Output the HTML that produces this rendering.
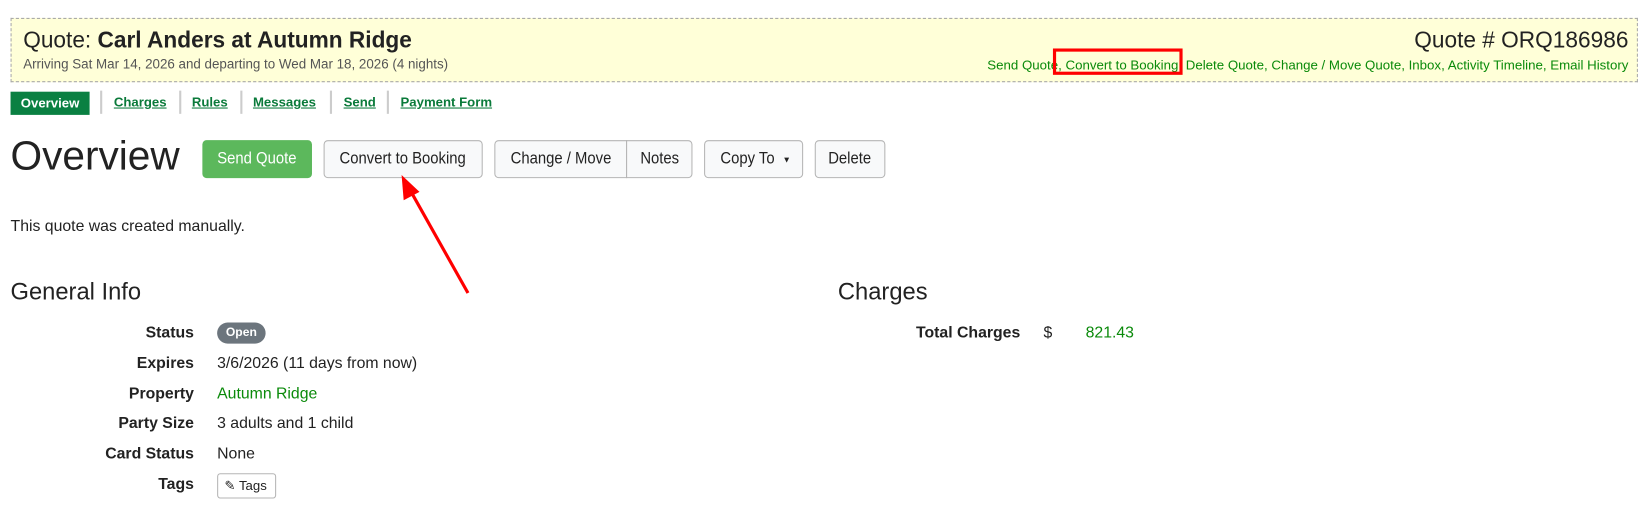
<!DOCTYPE html>
<html><head><meta charset="utf-8"><style>
*{box-sizing:border-box;margin:0;padding:0}
body{width:1651px;height:512px;background:#fff;font-family:"Liberation Sans",Arial,sans-serif;color:#222;position:relative;overflow:hidden}
#w{position:absolute;left:0;top:0;width:1567px;height:486px;transform:scale(1.054);transform-origin:0 0}
.a{position:absolute;white-space:nowrap}
.hdr{left:10px;top:17px;width:1544px;height:61px;background:#ffffd8;border:1px dashed #aaa}
.g{color:#0a8a0a}
.nar{display:inline-block;transform:scaleX(.88);transform-origin:center}
.tab{font-size:12.5px;font-weight:bold;color:#0a7a3a;text-decoration:underline;top:90px}
.sep{top:86px;width:2px;height:22px;background:#ccc}
.btn{top:133px;height:36px;border:1px solid #b5b5b5;border-radius:4px;background:#f8f9fa;font-size:16px;color:#222;display:flex;align-items:center;justify-content:center}
.lbl{font-size:15px;font-weight:bold;width:184px;text-align:right;left:0}
.val{font-size:15px;left:206px}
</style></head><body><div id="w">
<div class="a hdr"></div>
<div class="a" style="left:22px;top:26px;font-size:21.5px">Quote: <b>Carl Anders at Autumn Ridge</b></div>
<div class="a" style="left:22px;top:54px;font-size:12.7px;color:#555">Arriving Sat Mar 14, 2026 and departing to Wed Mar 18, 2026 (4 nights)</div>
<div class="a" style="right:22px;top:26px;font-size:21.5px">Quote # ORQ186986</div>
<div class="a g" style="right:22px;top:55px;font-size:12.6px">Send Quote, Convert to Booking, Delete Quote, Change / Move Quote, Inbox, Activity Timeline, Email History</div>
<div class="a" style="left:999px;top:46px;width:123px;height:25px;border:3px solid #f00"></div>

<div class="a" style="left:10px;top:87px;width:75px;height:22px;background:#0a8042;color:#fff;font-size:12.5px;font-weight:bold;text-align:center;line-height:22px">Overview</div>
<div class="a sep" style="left:95px"></div><div class="a tab" style="left:108px">Charges</div>
<div class="a sep" style="left:170px"></div><div class="a tab" style="left:182px">Rules</div>
<div class="a sep" style="left:228px"></div><div class="a tab" style="left:240px">Messages</div>
<div class="a sep" style="left:313px"></div><div class="a tab" style="left:326px">Send</div>
<div class="a sep" style="left:367px"></div><div class="a tab" style="left:380px">Payment Form</div>

<div class="a" style="left:10px;top:127px;font-size:38.5px;color:#222">Overview</div>
<div class="a btn" style="left:192px;width:104px;background:#5cb85c;border-color:#5cb85c;color:#fff"><span class="nar">Send Quote</span></div>
<div class="a btn" style="left:307px;width:151px"><span class="nar">Convert to Booking</span></div>
<div class="a btn" style="left:469px;width:126px;border-radius:4px 0 0 4px"><span class="nar">Change / Move</span></div>
<div class="a btn" style="left:594px;width:63px;border-radius:0 4px 4px 0"><span class="nar">Notes</span></div>
<div class="a btn" style="left:668px;width:94px"><span class="nar">Copy To</span>&nbsp;<span style="font-size:8px">▼</span></div>
<div class="a btn" style="left:773px;width:67px"><span class="nar">Delete</span></div>

<svg class="a" style="left:0;top:0" width="1567" height="486"><line x1="444" y1="278" x2="390" y2="182" stroke="#f00" stroke-width="3"/><polygon points="381,166 383,190 398,182" fill="#f00"/></svg>

<div class="a" style="left:10px;top:206px;font-size:15px">This quote was created manually.</div>
<div class="a" style="left:10px;top:264px;font-size:22.5px">General Info</div>
<div class="a" style="left:795px;top:264px;font-size:22.5px">Charges</div>

<div class="a lbl" style="top:307px">Status</div>
<div class="a" style="left:206px;top:306px;width:46px;height:20px;border-radius:10px;background:#6c757d;color:#fff;font-size:11.5px;font-weight:bold;text-align:center;line-height:20px">Open</div>
<div class="a lbl" style="top:336px">Expires</div><div class="a val" style="top:336px">3/6/2026 (11 days from now)</div>
<div class="a lbl" style="top:365px">Property</div><div class="a val g" style="top:365px">Autumn Ridge</div>
<div class="a lbl" style="top:393px">Party Size</div><div class="a val" style="top:393px">3 adults and 1 child</div>
<div class="a lbl" style="top:422px">Card Status</div><div class="a val" style="top:422px">None</div>
<div class="a lbl" style="top:451px">Tags</div>
<div class="a" style="left:206px;top:449px;width:56px;height:24px;border:1px solid #b5b5b5;border-radius:3px;font-size:12.5px;line-height:22px;padding-left:6px">✎ Tags</div>

<div class="a" style="left:0;top:307px;width:968px;text-align:right;font-size:15px;font-weight:bold">Total Charges</div>
<div class="a" style="left:990px;top:307px;font-size:15px">$</div>
<div class="a g" style="left:1030px;top:307px;font-size:15px">821.43</div>
</div></body></html>
